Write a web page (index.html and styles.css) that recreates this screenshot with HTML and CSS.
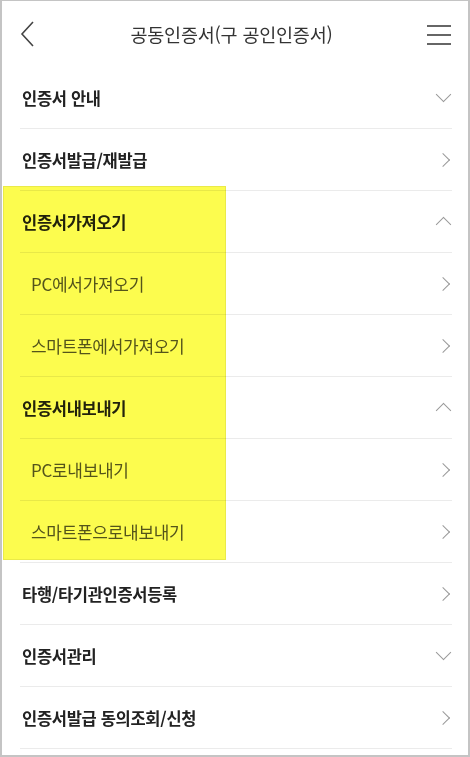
FILE: index.html
```html
<!DOCTYPE html>
<html lang="ko">
<head>
  <meta charset="UTF-8">
  <title>공동인증서(구 공인인증서)</title>
  <link rel="stylesheet" href="styles.css">
</head>
<body>
  <div class="screen">
    <header class="topbar">
      <svg class="back" width="16" height="26" viewBox="0 0 16 26">
        <polyline points="13,1 2,13 13,25" />
      </svg>
      <h1>공동인증서(구 공인인증서)</h1>
      <svg class="menu" width="24" height="22" viewBox="0 0 24 22">
        <line x1="0" y1="3" x2="24" y2="3" />
        <line x1="0" y1="12" x2="24" y2="12" />
        <line x1="0" y1="21" x2="24" y2="21" />
      </svg>
    </header>

    <ul class="menu-list">
      <li class="item"><span>인증서 안내</span><i class="chev down"></i></li>
      <li class="item"><span>인증서발급/재발급</span><i class="chev right"></i></li>
      <li class="item"><span>인증서가져오기</span><i class="chev up"></i></li>
      <li class="item sub"><span>PC에서가져오기</span><i class="chev right"></i></li>
      <li class="item sub"><span>스마트폰에서가져오기</span><i class="chev right"></i></li>
      <li class="item"><span>인증서내보내기</span><i class="chev up"></i></li>
      <li class="item sub"><span>PC로내보내기</span><i class="chev right"></i></li>
      <li class="item sub"><span>스마트폰으로내보내기</span><i class="chev right"></i></li>
      <li class="item"><span>타행/타기관인증서등록</span><i class="chev right"></i></li>
      <li class="item"><span>인증서관리</span><i class="chev down"></i></li>
      <li class="item"><span>인증서발급 동의조회/신청</span><i class="chev right"></i></li>
    </ul>

    <div class="marker"></div>
  </div>
</body>
</html>
```

FILE: styles.css
```css
* {
  margin: 0;
  padding: 0;
  box-sizing: border-box;
}

body {
  background: #fff;
  font-family: "Noto Sans CJK KR", "Noto Sans", sans-serif;
  color: #222;
}

.screen {
  position: relative;
  width: 470px;
  height: 757px;
  border: 2px solid #c4c4c4;
  border-top-width: 1px;
  overflow: hidden;
}

.topbar {
  height: 66px;
  display: flex;
  align-items: center;
  justify-content: space-between;
  padding: 0 17px 0 18px;
}

.topbar h1 {
  font-size: 18.5px;
  font-weight: 400;
  color: #333;
  letter-spacing: -0.2px;
}

.back polyline {
  fill: none;
  stroke: #444;
  stroke-width: 1.6;
}

.menu line {
  stroke: #555;
  stroke-width: 1.8;
}

.menu-list {
  list-style: none;
}

.item {
  height: 62px;
  margin: 0 16px 0 18px;
  padding-left: 2px;
  border-bottom: 1px solid #ebebeb;
  display: flex;
  align-items: center;
  justify-content: space-between;
  font-size: 16.5px;
  font-weight: 700;
  color: #222;
  letter-spacing: -0.3px;
}

.item.sub {
  padding-left: 11px;
  font-size: 17px;
  font-weight: 400;
  color: #555;
}

.chev {
  width: 10px;
  height: 10px;
  border-right: 1.5px solid #999;
  border-bottom: 1.5px solid #999;
  margin-right: 4px;
}

.chev.right {
  transform: rotate(-45deg);
  margin-right: 4px;
}

.chev.down {
  width: 11px;
  height: 11px;
  transform: rotate(45deg);
  margin-top: -6px;
  margin-right: 3px;
}

.chev.up {
  width: 11px;
  height: 11px;
  transform: rotate(-135deg);
  margin-top: 6px;
  margin-right: 3px;
}

.marker {
  position: absolute;
  left: 1px;
  top: 185px;
  width: 223px;
  height: 374px;
  background: #fcfc4e;
  border: 1px solid #eaea48;
  mix-blend-mode: multiply;
}
```
